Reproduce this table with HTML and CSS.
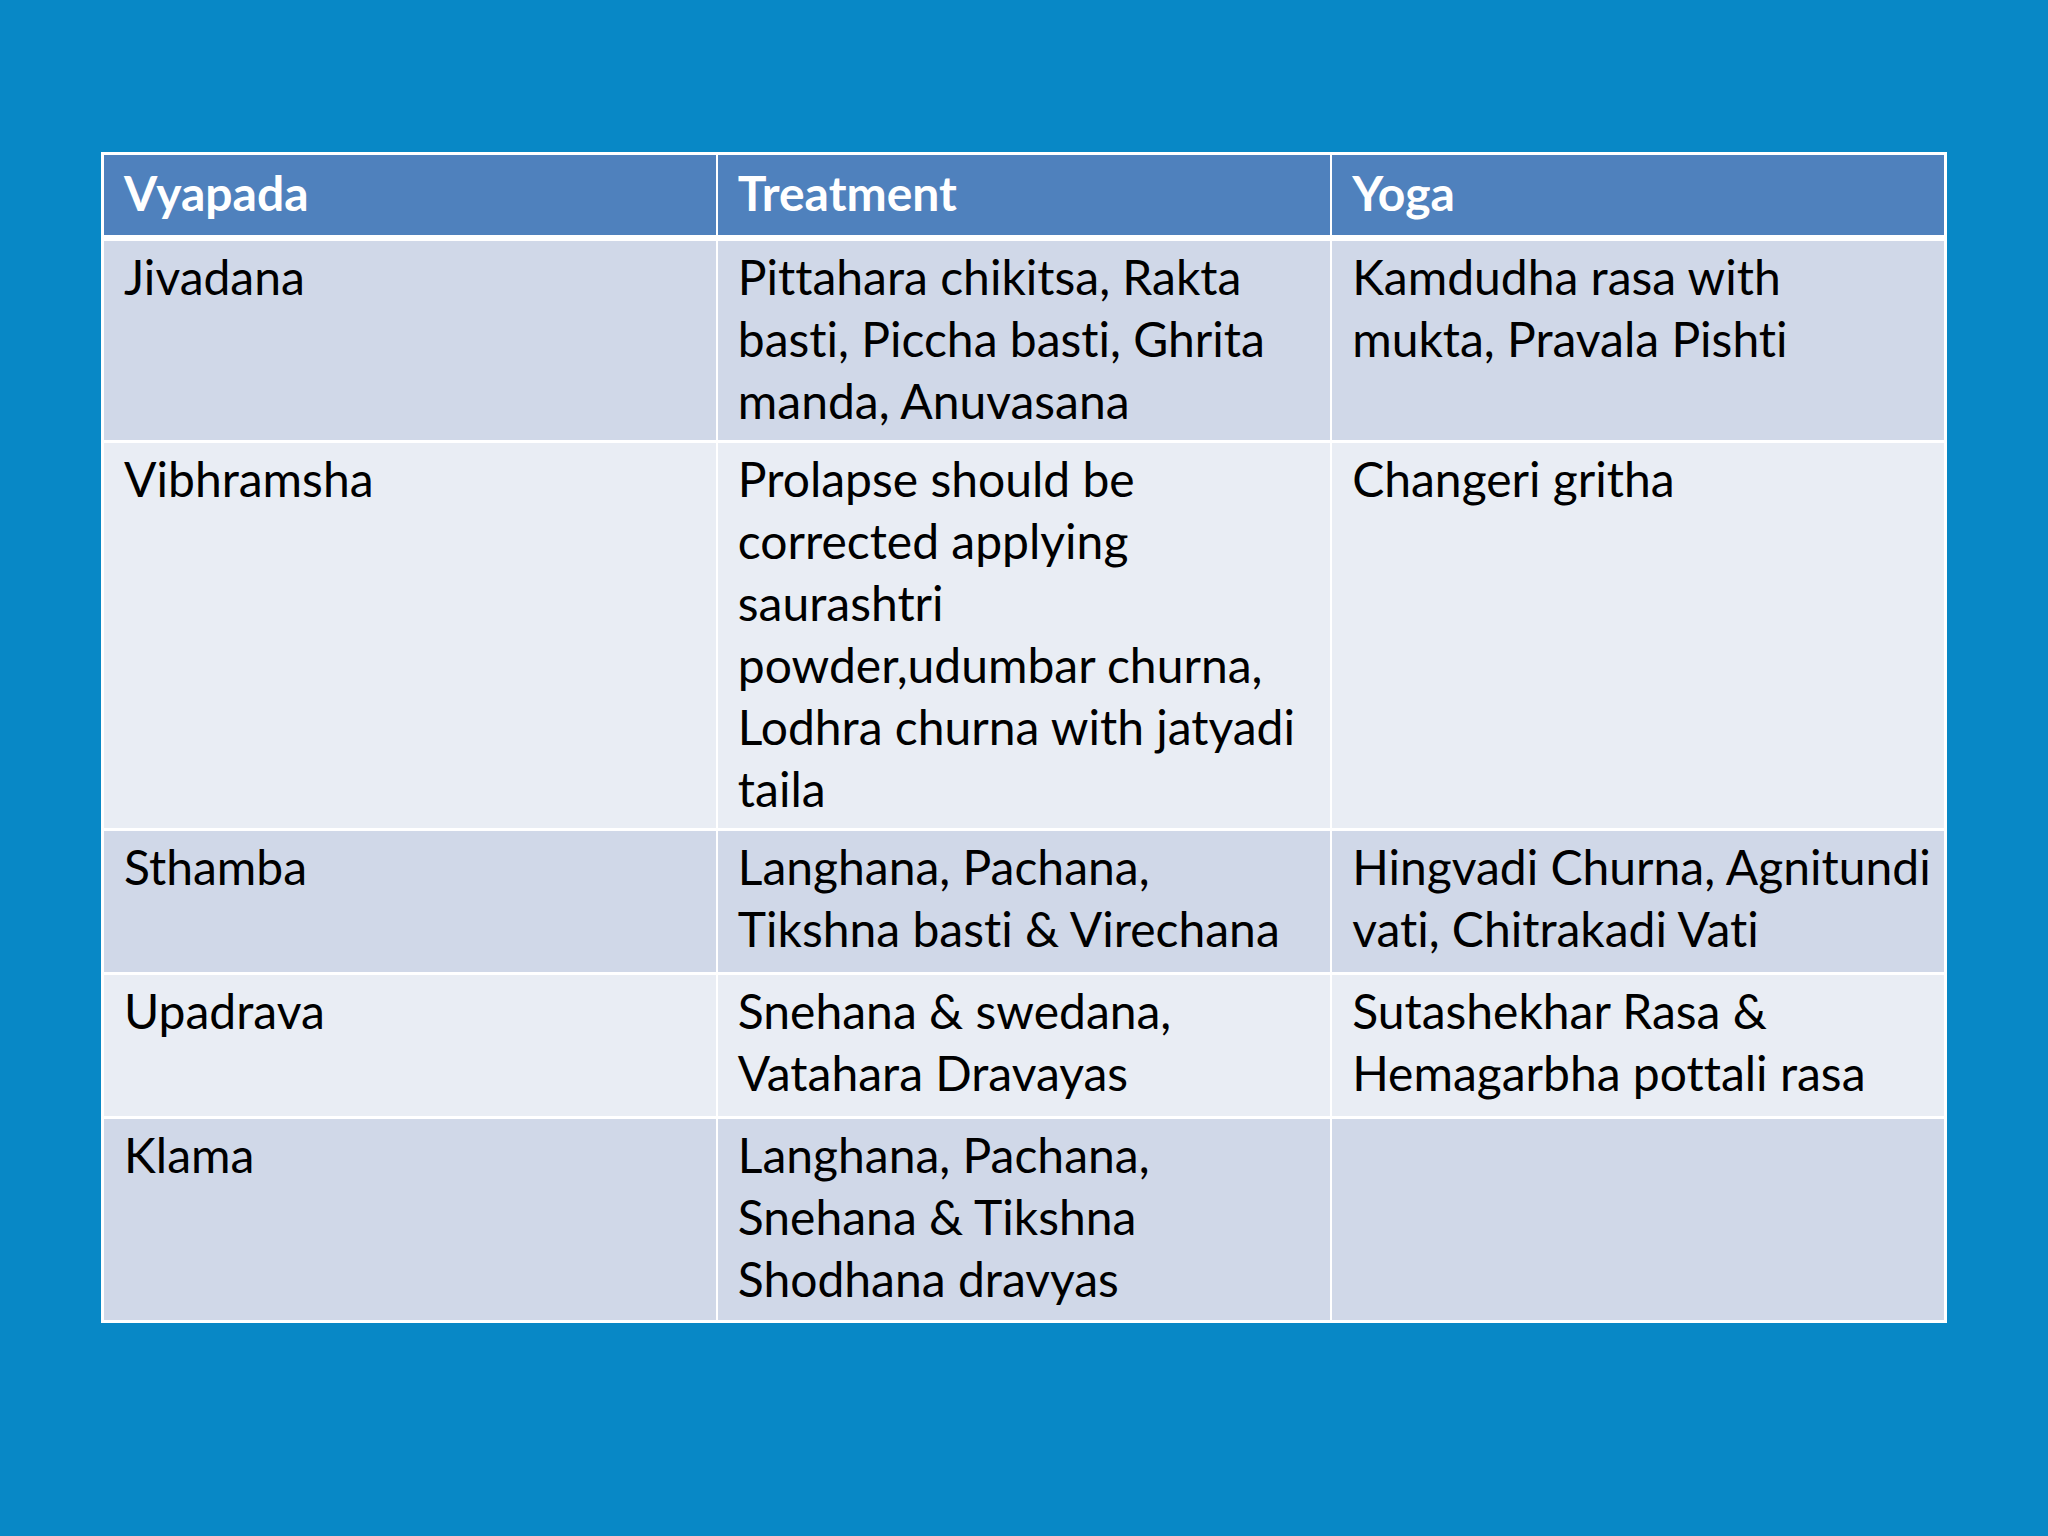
FILE: index.html
```html
<!DOCTYPE html>
<html>
<head>
<meta charset="utf-8">
<link rel="stylesheet" href="styles.css">
</head>
<body>
<div class="slide">
  <table class="grid">
    <thead>
      <tr class="head">
        <th>Vyapada</th>
        <th>Treatment</th>
        <th>Yoga</th>
      </tr>
    </thead>
    <tbody>
      <tr class="odd r3">
        <td>Jivadana</td>
        <td>Pittahara chikitsa, Rakta<br>basti, Piccha basti, Ghrita<br>manda, Anuvasana</td>
        <td>Kamdudha rasa with<br>mukta, Pravala Pishti</td>
      </tr>
      <tr class="even r6">
        <td>Vibhramsha</td>
        <td>Prolapse should be<br>corrected applying<br>saurashtri<br>powder,udumbar churna,<br>Lodhra churna with jatyadi<br>taila</td>
        <td>Changeri gritha</td>
      </tr>
      <tr class="odd r2">
        <td>Sthamba</td>
        <td>Langhana, Pachana,<br>Tikshna basti &amp; Virechana</td>
        <td>Hingvadi Churna, Agnitundi<br>vati, Chitrakadi Vati</td>
      </tr>
      <tr class="even r2">
        <td>Upadrava</td>
        <td>Snehana &amp; swedana,<br>Vatahara Dravayas</td>
        <td>Sutashekhar Rasa &amp;<br>Hemagarbha pottali rasa</td>
      </tr>
      <tr class="odd r3">
        <td>Klama</td>
        <td>Langhana, Pachana,<br>Snehana &amp; Tikshna<br>Shodhana dravyas</td>
        <td></td>
      </tr>
    </tbody>
  </table>
</div>
</body>
</html>
```

FILE: styles.css
```css
html, body {
  margin: 0;
  padding: 0;
  background: #0888c6;
}

.slide {
  width: 2048px;
  height: 1536px;
  box-sizing: border-box;
  padding: 152px 0 0 101px;
  background: #0888c6;
  font-family: "Lato", "Open Sans", sans-serif;
  font-variant-ligatures: none;
}

.grid {
  border-collapse: collapse;
  table-layout: fixed;
  width: 1846px;
  border: 3px solid #ffffff;
}

.grid th,
.grid td {
  width: 33.33%;
  box-sizing: border-box;
  border-left: 2px solid #ffffff;
  border-right: 2px solid #ffffff;
  border-top: 3px solid #ffffff;
  text-align: left;
  vertical-align: top;
  padding: 5px 20px 5px 20px;
  font-size: 48px;
  line-height: 62px;
  color: #000000;
  white-space: nowrap;
  font-variant-ligatures: none;
}

.head th {
  background: #4f81bd;
  color: #ffffff;
  font-weight: 700;
  height: 84px;
  padding-top: 7px;
  border-bottom: 6px solid #ffffff;
}

.odd td {
  background: #d0d8e8;
}

.even td {
  background: #e9edf4;
}

.r3 td {
  height: 204px;
}

.r6 td {
  height: 388px;
}

.r2 td {
  height: 144px;
}
```
